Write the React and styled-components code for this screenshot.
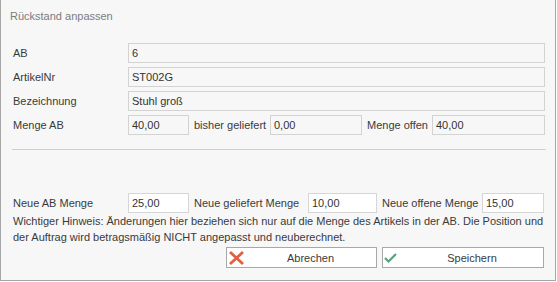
import React from 'react';
import styled, { createGlobalStyle } from 'styled-components';

const Global = createGlobalStyle`
  html, body {
    margin: 0;
    background: #ffffff;
  }
  body {
    font-family: "Liberation Sans", Arial, sans-serif;
    font-size: 11px;
    color: #3a3a3a;
  }
`;

export default function App() {
  return (
    <>
      <Global />
      <Panel>
        <Title>Rückstand anpassen</Title>
        <Form>
          <Row>
            <Label>AB</Label>
            <Field grow>6</Field>
          </Row>
          <Row>
            <Label>ArtikelNr</Label>
            <Field grow>ST002G</Field>
          </Row>
          <Row>
            <Label>Bezeichnung</Label>
            <Field grow>Stuhl groß</Field>
          </Row>
          <Row>
            <Label>Menge AB</Label>
            <Field w={61}>40,00</Field>
            <InlineLabel w={81}>bisher geliefert</InlineLabel>
            <Field w={92}>0,00</Field>
            <InlineLabel w={70}>Menge offen</InlineLabel>
            <Field grow>40,00</Field>
          </Row>
        </Form>
        <Separator />
        <Bottom>
          <Row>
            <Label>Neue AB Menge</Label>
            <Input w={61} defaultValue="25,00" />
            <InlineLabel w={119}>Neue geliefert Menge</InlineLabel>
            <Input w={69} defaultValue="10,00" />
            <InlineLabel w={105}>Neue offene Menge</InlineLabel>
            <Input w={62} defaultValue="15,00" />
          </Row>
          <Hint>
            Wichtiger Hinweis: Änderungen hier beziehen sich nur auf die Menge des Artikels in der AB. Die Position und
            der Auftrag wird betragsmäßig NICHT angepasst und neuberechnet.
          </Hint>
          <Buttons>
            <Button w={151}>
              <Icon>
                <svg width="17" height="15" viewBox="0 0 17 15">
                  <path d="M2 1.5 L15 13.5 M15 1.5 L2 13.5" stroke="#e2603e" strokeWidth="2.8" />
                </svg>
              </Icon>
              Abrechen
            </Button>
            <Button w={162}>
              <Icon>
                <svg width="13" height="10" viewBox="0 0 13 10">
                  <path d="M1 5 L4.5 8.5 L12 1" stroke="#5e9e82" strokeWidth="2.2" fill="none" />
                </svg>
              </Icon>
              Speichern
            </Button>
          </Buttons>
        </Bottom>
      </Panel>
    </>
  );
}

const Panel = styled.div`
  box-sizing: border-box;
  width: 556px;
  height: 281px;
  background: #f7f7f7;
  border: 1px solid #a6a6a6;
  border-top: none;
  display: flex;
  flex-direction: column;
`;

const Title = styled.div`
  color: #7c7c7c;
  line-height: 13px;
  padding: 10px 0 0 9px;
`;

const Form = styled.div`
  display: flex;
  flex-direction: column;
  gap: 4px;
  padding: 20px 10px 0 12px;
`;

const Row = styled.div`
  display: flex;
  align-items: center;
  height: 20px;
`;

const Label = styled.div`
  width: 115px;
  flex: none;
`;

const InlineLabel = styled.div`
  box-sizing: border-box;
  width: ${(p) => p.w}px;
  flex: none;
  padding-left: 5px;
  white-space: nowrap;
`;

const Field = styled.div`
  box-sizing: border-box;
  height: 20px;
  border: 1px solid #d3d3d3;
  padding: 0 0 0 3px;
  display: flex;
  align-items: center;
  color: #333;
  ${(p) => (p.grow ? 'flex: 1;' : `width: ${p.w}px; flex: none;`)}
`;

const Input = styled.input`
  box-sizing: border-box;
  height: 20px;
  width: ${(p) => p.w}px;
  flex: none;
  border: 1px solid #d6d6d6;
  background: #fff;
  padding: 0 0 0 3px;
  font: inherit;
  color: #333;
  outline: none;
`;

const Separator = styled.div`
  height: 1px;
  background: #d0d0d0;
  margin: 14px 9px 0 11px;
`;

const Bottom = styled.div`
  display: flex;
  flex-direction: column;
  padding: 43px 11px 0 12px;
`;

const Hint = styled.div`
  line-height: 16px;
`;

const Buttons = styled.div`
  display: flex;
  justify-content: flex-end;
  gap: 5px;
  margin-top: 2px;
`;

const Button = styled.button`
  position: relative;
  box-sizing: border-box;
  width: ${(p) => p.w}px;
  height: 21px;
  border: 1px solid #a8a8a8;
  background: #fff;
  font: inherit;
  color: #3a3a3a;
  display: flex;
  align-items: center;
  justify-content: center;
  padding: 0 0 0 18px;
`;

const Icon = styled.span`
  position: absolute;
  left: 1px;
  top: 50%;
  transform: translateY(-50%);
  display: flex;
`;
